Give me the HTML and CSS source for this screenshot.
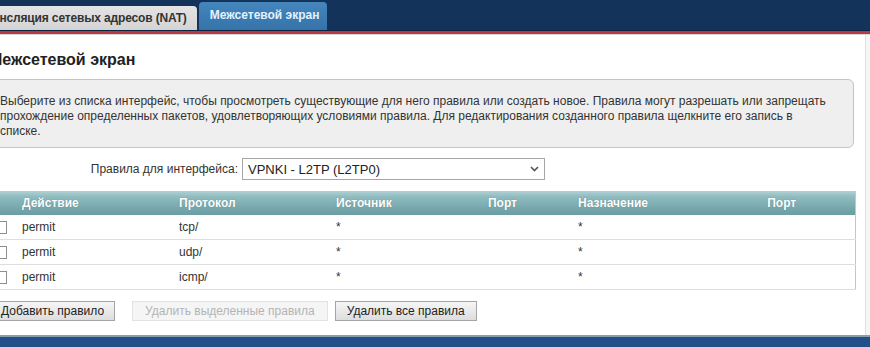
FILE: index.html
```html
<!DOCTYPE html>
<html lang="ru">
  <head>
    <meta charset="UTF-8" />
    <title>Межсетевой экран</title>
    <link rel="stylesheet" href="styles.css">
  </head>
  <body>
    <header class="topbar">
      <nav class="tabs">
        <a class="tab" href="#">Трансляция сетевых адресов (NAT)</a>
        <a class="tab active" href="#">Межсетевой экран</a>
      </nav>
    </header>
    <div class="redline"></div>

    <main class="panel">
      <h1>Межсетевой экран</h1>
      <p class="info">
        Выберите из списка интерфейс, чтобы просмотреть существующие для него правила или создать новое. Правила могут разрешать или запрещать прохождение определенных пакетов, удовлетворяющих условиями правила. Для редактирования созданного правила щелкните его запись в списке.
      </p>

      <div class="iface">
        <label for="iface">Правила для интерфейса:</label>
        <span class="select-wrap">
          <select id="iface">
            <option>VPNKI - L2TP (L2TP0)</option>
          </select>
          <svg class="chevron" width="9" height="6" viewBox="0 0 9 6">
            <path d="M1 1 L4.5 4.5 L8 1" fill="none" stroke="#555" stroke-width="1.6" />
          </svg>
        </span>
      </div>

      <table class="rules">
        <colgroup>
          <col style="width: 25px">
          <col style="width: 157px">
          <col style="width: 157px">
          <col style="width: 107px">
          <col style="width: 135px">
          <col style="width: 139px">
          <col style="width: 146px">
        </colgroup>
        <thead>
          <tr>
            <th></th>
            <th>Действие</th>
            <th>Протокол</th>
            <th>Источник</th>
            <th class="port">Порт</th>
            <th>Назначение</th>
            <th class="port">Порт</th>
          </tr>
        </thead>
        <tbody>
          <tr>
            <td class="cb"><input type="checkbox"></td>
            <td>permit</td>
            <td>tcp/</td>
            <td>*</td>
            <td class="port"></td>
            <td>*</td>
            <td class="port"></td>
          </tr>
          <tr>
            <td class="cb"><input type="checkbox"></td>
            <td>permit</td>
            <td>udp/</td>
            <td>*</td>
            <td class="port"></td>
            <td>*</td>
            <td class="port"></td>
          </tr>
          <tr>
            <td class="cb"><input type="checkbox"></td>
            <td>permit</td>
            <td>icmp/</td>
            <td>*</td>
            <td class="port"></td>
            <td>*</td>
            <td class="port"></td>
          </tr>
        </tbody>
      </table>

      <div class="buttons">
        <button class="add">Добавить правило</button>
        <button disabled>Удалить выделенные правила</button>
        <button>Удалить все правила</button>
      </div>
    </main>

    <footer class="bottombar"></footer>
  </body>
</html>
```

FILE: styles.css
```css
body {
  margin: 0;
  font-family: "Liberation Sans", Arial, sans-serif;
  font-size: 12px;
  color: #333;
  background-color: #f6f6f6;
  overflow: hidden;
}
.topbar {
  height: 30px;
  background-color: #13335b;
  border-bottom: 1px solid #0c2440;
  display: flex;
  align-items: flex-end;
}
.tabs {
  display: flex;
  align-items: flex-end;
  gap: 2px;
  margin-left: -31px;
}
.tab {
  display: block;
  text-decoration: none;
  font-weight: bold;
  letter-spacing: -0.15px;
  padding: 0 10px;
  border-radius: 4px 4px 0 0;
}
.tab:not(.active) {
  height: 24px;
  line-height: 24px;
  color: #333;
  background: linear-gradient(#e4e4e4, #d4d4d4);
}
.tab.active {
  height: 28px;
  line-height: 27px;
  letter-spacing: 0;
  color: #e4f2ff;
  background: linear-gradient(#4586bd, #3573a9);
  padding: 0 8px 0 11px;
}
.redline {
  height: 3px;
  background-color: #b8393f;
  border-bottom: 1px solid #d7d7de;
}
.panel {
  box-sizing: border-box;
  height: 300px;
  width: 878px;
  margin-left: -12px;
  padding: 0 11px 0 1px;
  background-color: #fff;
  border-right: 1px solid #e0e0e0;
}
h1 {
  margin: 0;
  padding-top: 16px;
  font-size: 16px;
  line-height: 18px;
  color: #222;
}
.info {
  margin: 10px 0 0;
  padding: 14px 24px 8px 10px;
  line-height: 15px;
  background-color: #efefef;
  border: 1px solid #c4c4c4;
  border-radius: 6px;
}
.iface {
  display: flex;
  align-items: center;
  margin-top: 10px;
}
.iface label {
  width: 249px;
  text-align: right;
  padding-right: 4px;
}
.select-wrap {
  position: relative;
  display: block;
}
.select-wrap select {
  appearance: none;
  display: block;
  width: 303px;
  height: 22px;
  margin: 0;
  padding: 0 0 0 5px;
  font-family: inherit;
  font-size: 13px;
  color: #222;
  background-color: #fff;
  border: 1px solid #a6a6a6;
  border-radius: 0;
}
.chevron {
  position: absolute;
  right: 6px;
  top: 8px;
  pointer-events: none;
}
.rules {
  width: 866px;
  margin-top: 11px;
  border-collapse: collapse;
  table-layout: fixed;
  border-right: 1px solid #c6c6c6;
  border-bottom: 1px solid #c6c6c6;
}
.rules th {
  height: 24px;
  padding: 0 0 0 8px;
  text-align: left;
  color: #fff;
  font-weight: bold;
  text-shadow: 0 0 1px rgba(40, 80, 85, 0.5);
  background: linear-gradient(#b0d1d4, #8ebbbf 25%, #75a6ab 75%, #6c9da2);
}
.rules td {
  height: 24px;
  padding: 0 0 0 8px;
  border-bottom: 1px solid #dedede;
  color: #333;
}
.rules .port {
  text-align: center;
  padding-left: 0;
}
.rules td.cb {
  padding-left: 5px;
}
.cb input {
  appearance: none;
  display: block;
  width: 13px;
  height: 13px;
  margin: 0;
  border: 1px solid #8e8e8e;
  background-color: #fff;
}
.buttons {
  display: flex;
  gap: 7px;
  margin: 11px 0 0 1px;
}
.buttons button {
  height: 20px;
  padding: 0 11px;
  font-family: inherit;
  font-size: 12px;
  color: #222;
  background: linear-gradient(#f6f6f6, #dddddd);
  border: 1px solid #a4a4a4;
  border-radius: 0;
}
.buttons .add {
  padding: 0 10px;
  margin-right: 10px;
}
.buttons button:disabled {
  color: #b4b4b4;
  background: #f5f5f5;
  border-color: #e2e2e2;
  padding: 0 12px;
}
.bottombar {
  height: 12px;
  background-color: #214f88;
  border-top: 2px solid #8d9bb0;
}
```
